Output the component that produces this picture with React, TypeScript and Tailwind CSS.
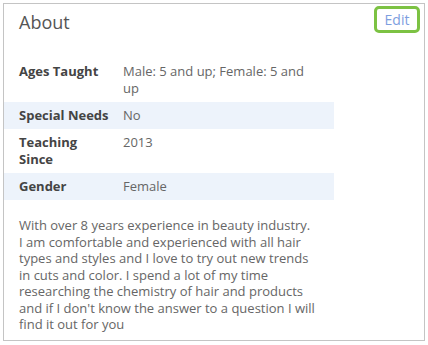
const rows: { label: string; value: string; shaded: boolean }[] = [
  { label: "Ages Taught", value: "Male: 5 and up; Female: 5 and up", shaded: false },
  { label: "Special Needs", value: "No", shaded: true },
  { label: "Teaching Since", value: "2013", shaded: false },
  { label: "Gender", value: "Female", shaded: true },
];

export default function App() {
  return (
    <div className="w-[428px] h-[345px] bg-white p-[3px] font-['Open_Sans',sans-serif]">
      <section className="h-[338px] w-[422px] border border-[#c4c4c4] bg-white">
        <div className="flex items-start justify-between h-[54px] pl-[15px] pr-[4px]">
          <h2 className="mt-[6px] text-[18px] leading-[24px] text-[#555]">About</h2>
          <button className="mt-[2px] w-[46px] h-[27px] rounded-[5px] border-[3px] border-[#7cc243] text-[14px] leading-[20px] text-[#7d9ee0]">
            Edit
          </button>
        </div>

        <div className="w-[330px]">
          {rows.map((r) => (
            <div
              key={r.label}
              className={`grid grid-cols-[119px_1fr] py-[5px] text-[13px] leading-[17px] ${r.shaded ? "bg-[#edf3fb]" : ""}`}
            >
              <div className="pl-[15px] pr-[12px] font-bold text-[#444]">{r.label}</div>
              <div className="pr-[21px] text-[#666]">{r.value}</div>
            </div>
          ))}
        </div>

        <p className="mt-[17px] w-[316px] pl-[15px] text-[13px] leading-[16.5px] text-[#666]">
          With over 8 years experience in beauty industry.
          <br />I am comfortable and experienced with all hair types and styles and I love to try
          out new trends in cuts and color. I spend a lot of my time researching the chemistry of
          hair and products and if I don't know the answer to a question I will find it out for
          you
        </p>
      </section>
    </div>
  );
}
